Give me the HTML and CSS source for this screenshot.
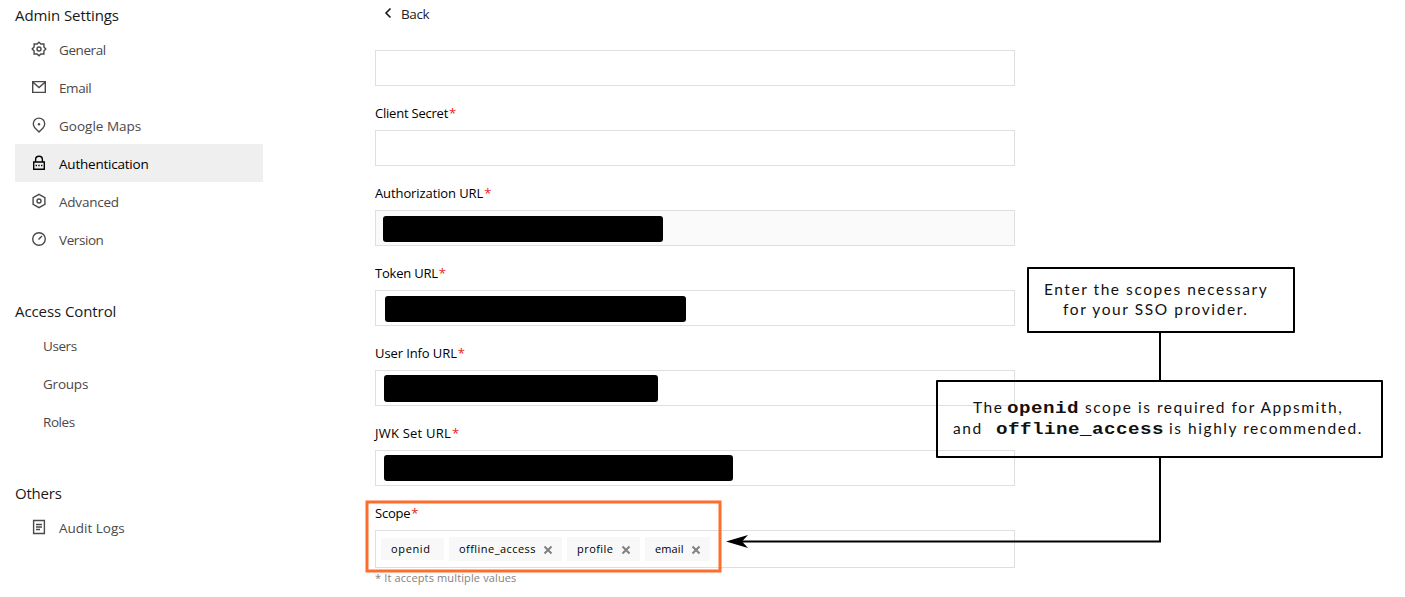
FILE: index.html
```html
<!DOCTYPE html>
<html lang="en">
<head>
<meta charset="utf-8">
<title>Admin Settings</title>
<link rel="stylesheet" href="styles.css">
</head>
<body>
<div class="page">
  <aside class="sidebar">
    <section class="group">
      <h2>Admin Settings</h2>
      <a class="item tight"><svg class="icon" viewBox="0 0 16 16"><path d="M8 1.200 9.900 3H12.900V6L14.800 8 12.900 10V13H9.900L8 14.800 6.100 13H3.100V10L1.200 8 3.100 6V3H6.100Z"/><circle cx="8" cy="8" r="2"/></svg><span>General</span></a>
      <a class="item tight"><svg class="icon" viewBox="0 0 16 16"><path d="M1.700 2.600H14.300V13.400H1.700ZM2 3.200 8 8.600 14 3.200"/></svg><span>Email</span></a>
      <a class="item"><svg class="icon" viewBox="0 0 16 16"><path d="M8 14.900 4 10.900A5.700 5.700 0 1 1 12 10.900Z"/><circle class="dot" cx="8" cy="7.300" r="1.200"/></svg><span>Google Maps</span></a>
      <a class="item snug active"><svg class="icon" viewBox="0 0 16 16"><path d="M2.700 7H13.300V14.300H2.700ZM4.600 7V4.700A3.400 3.400 0 0 1 11.400 4.700V7M4.600 10.500h1.400M7.300 10.500h1.400M10 10.500h1.400"/></svg><span>Authentication</span></a>
      <a class="item snug"><svg class="icon" viewBox="0 0 16 16"><path d="M8 1.300 13.900 4.600V11.400L8 14.700 2.100 11.400V4.600Z"/><circle cx="8" cy="8" r="2"/></svg><span>Advanced</span></a>
      <a class="item tight"><svg class="icon" viewBox="0 0 16 16"><circle cx="8" cy="8" r="6.300"/><path d="M7.500 8.500 11 5"/></svg><span>Version</span></a>
    </section>
    <section class="group">
      <h2>Access Control</h2>
      <a class="item plain tight"><span>Users</span></a>
      <a class="item plain snug"><span>Groups</span></a>
      <a class="item plain tight"><span>Roles</span></a>
    </section>
    <section class="group">
      <h2 class="snug">Others</h2>
      <a class="item"><svg class="icon" viewBox="0 0 16 16"><path d="M2.600 1.500H13.400V14.500H2.600ZM5 5.500h6M5 8h6M5 10.500h4"/></svg><span>Audit Logs</span></a>
    </section>
  </aside>
  <main class="form">
    <a class="back tight"><svg class="chevron" viewBox="0 0 8 12"><path d="M6.500 1.500 2 6 6.500 10.500"/></svg><span>Back</span></a>
    <div class="input"></div>
    <label class="snug"><span>Client Secret</span><i>*</i></label>
    <div class="input"></div>
    <label><span>Authorization URL</span><i>*</i></label>
    <div class="input muted"><b class="redacted auth"></b></div>
    <label class="snug"><span>Token URL</span><i>*</i></label>
    <div class="input"><b class="redacted token"></b></div>
    <label><span>User Info URL</span><i>*</i></label>
    <div class="input"><b class="redacted info"></b></div>
    <label class="loose"><span>JWK Set URL</span><i>*</i></label>
    <div class="input"><b class="redacted jwk"></b></div>
    <label class="snug"><span>Scope</span><i>*</i></label>
    <div class="input tags">
      <div class="tag fixed"><span>openid</span></div>
      <div class="tag offline"><span>offline_access</span><svg class="close" viewBox="0 0 10 10"><path d="M1.500 1.500 8.500 8.500M8.500 1.500 1.500 8.500"/></svg></div>
      <div class="tag profile"><span>profile</span><svg class="close" viewBox="0 0 10 10"><path d="M1.500 1.500 8.500 8.500M8.500 1.500 1.500 8.500"/></svg></div>
      <div class="tag email"><span>email</span><svg class="close" viewBox="0 0 10 10"><path d="M1.500 1.500 8.500 8.500M8.500 1.500 1.500 8.500"/></svg></div>
    </div>
    <p class="hint">* It accepts multiple values</p>
  </main>
  <svg class="overlay" viewBox="0 0 1405 597">
    <rect class="highlight" x="367" y="502" width="353" height="69"/>
    <path class="wire" d="M1160 333V380M1160 458V541.500H742"/>
    <path class="arrow" d="M726 541.500 748 535 742 541.500 748 548Z"/>
  </svg>
  <div class="callout first"><div class="line">Enter the scopes necessary</div><div class="line indent">for your SSO provider.</div></div>
  <div class="callout second">
    <div class="line indent"><span class="lead">The</span><code class="short">openid</code><span>scope is required for Appsmith,</span></div>
    <div class="line"><span class="lead wide">and</span><code class="long">offline_access</code><span>is highly recommended.</span></div>
  </div>
</div>
</body>
</html>
```
FILE: styles.css
```css
* { box-sizing: border-box; }
body { margin: 0; background: #fff; font-family: "Open Sans", "Noto Sans", sans-serif; }
.page { position: relative; width: 1405px; height: 597px; overflow: hidden; display: flex; }
.sidebar { width: 375px; padding-left: 15px; display: flex; flex-direction: column; gap: 38px; }
.group { width: 248px; }
h2 { margin: 0; height: 30px; line-height: 31px; font-size: 15px; font-weight: 400; letter-spacing: -0.08px; color: #191919; }
.item { height: 38px; padding: 2px 0 0 16px; display: flex; align-items: center; gap: 12px; font-size: 13.5px; color: #4b4848; }
.item.plain { padding-left: 28px; }
.item.active { background: #efefef; color: #000; }
.icon { width: 16px; height: 16px; margin-top: -2px; fill: none; stroke: currentColor; stroke-width: 1.4; }
.icon .dot { fill: currentColor; stroke: none; }
.form { width: 640px; }
.back { height: 50px; padding: 4px 0 0 9px; display: flex; align-items: flex-start; gap: 9px; font-size: 13.5px; line-height: 20px; color: #222; }
.chevron { width: 8px; height: 12px; margin-top: 3px; fill: none; stroke: #191919; stroke-width: 1.6; }
.input { height: 36px; border: 1px solid #e0dede; display: flex; }
.input.muted { background: #fafafa; }
label { height: 44px; padding-top: 17px; display: flex; font-size: 13px; line-height: 20px; letter-spacing: -0.1px; color: #000; }
label i { margin-left: 1px; font-style: normal; color: #e81c1c; }
.snug { letter-spacing: -0.22px; }
.tight { letter-spacing: -0.42px; }
.loose { letter-spacing: 0.22px; }
.redacted { background: #000; border-radius: 3px; }
.redacted.auth { width: 280px; height: 26px; margin: 5px 0 0 7px; }
.redacted.token { width: 301px; height: 26px; margin: 5px 0 0 9px; }
.redacted.info { width: 274px; height: 27px; margin: 4px 0 0 8px; }
.redacted.jwk { width: 349px; height: 26px; margin: 4px 0 0 8px; }
.tags { height: 38px; padding-left: 5px; align-items: center; gap: 5px; }
.tag { height: 24px; padding: 0 9px 0 10px; display: flex; align-items: center; justify-content: space-between; background: #f8f8f8; font-size: 11px; font-weight: 500; letter-spacing: 0.45px; color: #000; }
.tag span { margin-top: -2px; }
.tag.fixed { width: 63px; height: 22px; letter-spacing: 0.65px; }
.tag.offline { width: 113px; }
.tag.profile { width: 73px; }
.tag.email { width: 65px; letter-spacing: 0.1px; }
.close { width: 10px; height: 10px; margin-top: 1px; stroke: #808080; stroke-width: 2; }
.hint { margin: 2px 0 0; font-size: 11px; line-height: 16px; letter-spacing: 0.13px; color: #858282; }
.overlay { position: absolute; inset: 0; width: 1405px; height: 597px; fill: none; }
.highlight { stroke: #ff6d2d; stroke-width: 3; }
.wire { stroke: #000; stroke-width: 2; }
.arrow { fill: #000; }
.callout { position: absolute; border: 2px solid #000; border-radius: 1px; font-family: Lato, sans-serif; font-size: 15.5px; line-height: 20px; letter-spacing: 1.55px; white-space: nowrap; color: #111; }
.line { display: flex; height: 20px; }
.first { left: 1027px; top: 267px; width: 268px; height: 66px; padding: 10px 0 0 15px; }
.first .indent { padding-left: 19px; letter-spacing: 1.6px; }
.second { left: 936px; top: 380px; width: 447px; height: 78px; padding: 15px 0 0 15px; }
.second .line { height: 21px; }
.second .indent { padding-left: 20px; }
.lead { width: 34px; }
.lead.wide { width: 43px; }
/* stretched bold monospace, 12px per character */
code { font-family: "Liberation Mono", monospace; font-size: 16px; font-weight: 700; letter-spacing: 0.4px; padding-top: 2px; transform: scaleX(1.2); transform-origin: 0 0; }
code.short { width: 60px; margin-right: 18px; }
code.long { width: 140px; margin-right: 33px; }
```
